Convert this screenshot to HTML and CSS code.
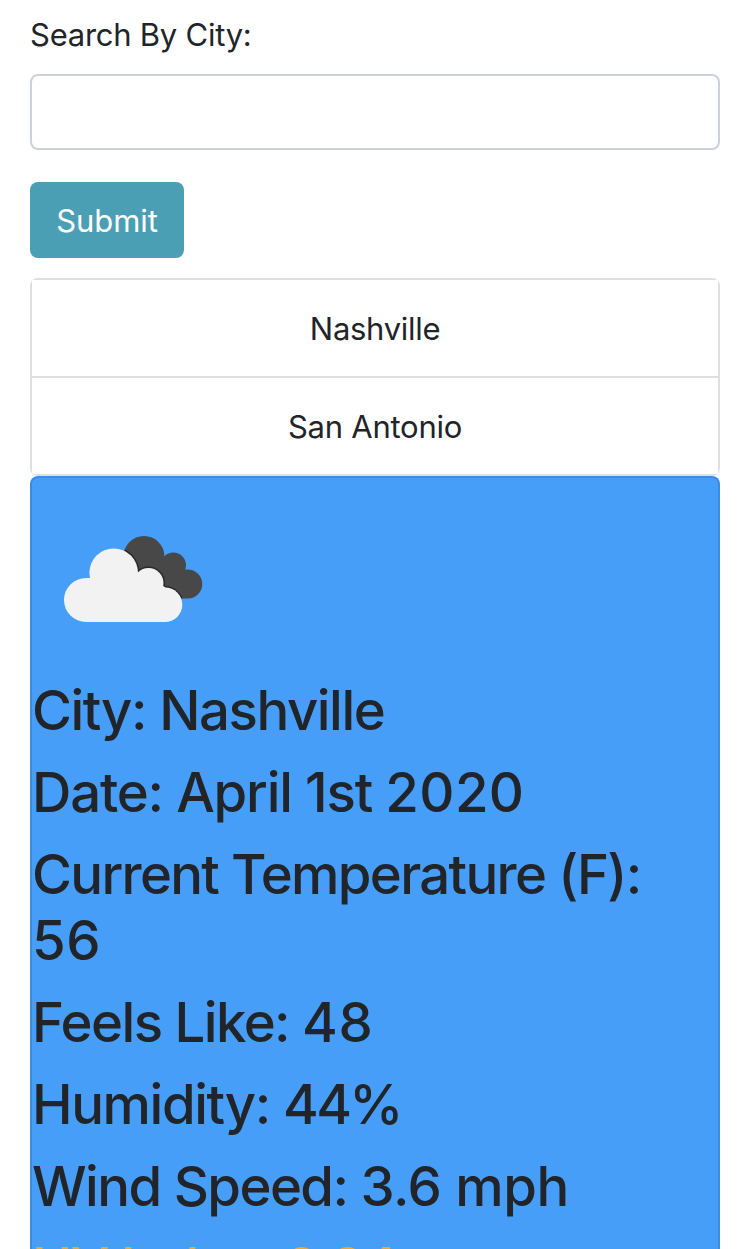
FILE: index.html
```
<!DOCTYPE html>
<html lang="en">
<head>
<meta charset="utf-8">
<title>Weather</title>
<link rel="stylesheet" href="styles.css">
</head>
<body>
<main class="page">
  <form class="search">
    <label class="search-label" for="city">Search By City:</label>
    <input class="search-input" id="city" type="text">
    <button class="submit" type="button">Submit</button>
  </form>
  <ul class="cities">
    <li class="city nashville">Nashville</li>
    <li class="city">San Antonio</li>
  </ul>
  <section class="card">
    <svg class="icon" viewBox="0 0 200 200" width="200" height="200">
      <defs>
        <g id="front">
          <circle cx="54" cy="122" r="22"/><circle cx="81.7" cy="94.7" r="24.3"/>
          <circle cx="116.5" cy="105" r="15"/><circle cx="133" cy="126.7" r="17.3"/>
          <path d="M54 100H120L134 110V144H54z"/>
        </g>
        <clipPath id="back">
          <circle cx="112" cy="78.5" r="20.5"/><circle cx="141.3" cy="87.3" r="12.7"/>
          <circle cx="155.7" cy="106" r="14.6"/>
          <path d="M100 90L112 78L141 87L156 106V120.6H120z"/>
        </clipPath>
      </defs>
      <g clip-path="url(#back)">
        <rect width="200" height="200" fill="#484849"/>
        <use href="#front" fill="#2b292b" stroke="#2b292b" stroke-width="3"/>
      </g>
      <use href="#front" fill="#f2f2f2"/>
    </svg>
    <h3 class="line city-name">City: Nashville</h3>
    <h3 class="line date">Date: April 1st <span class="year">2020</span></h3>
    <h3 class="line temp">Current Temperature (F): <span class="num">56</span></h3>
    <h3 class="line">Feels Like: <span class="num">48</span></h3>
    <h3 class="line humidity">Humidity: <span class="percent">44%</span></h3>
    <h3 class="line wind">Wind Speed: <span class="speed">3.6 mph</span></h3>
    <h3 class="line uv">UV Index: <span class="uv-value">6.24</span></h3>
  </section>
</main>
</body>
</html>
```
FILE: styles.css
```
* { box-sizing: border-box; }
body { margin: 0; background: #fff; color: #212529; font: 400 31px/48px Inter, sans-serif; letter-spacing: -0.25px; }
.page { display: flex; flex-direction: column; height: 1249px; padding: 11px 30px 0; overflow: hidden; }
.search-label { display: block; margin-bottom: 15px; }
.search-input { display: block; width: 100%; height: 76px; border: 2px solid #ced1db; border-radius: 8px; background: #fff; }
.submit { display: block; width: 154px; height: 76px; margin-top: 32px; padding: 2px 0 0; border: 0; border-radius: 8px; background: #4a9fb5; color: #fff; font: inherit; letter-spacing: -0.1px; }
.cities { flex: none; list-style: none; margin: 20px 0 0; padding: 0; border-radius: 8px; overflow: hidden; text-align: center; }
.city { height: 98px; padding: 25px 0; border: 2px solid #dfdfdf; }
.city + .city { border-top: 0; }
.nashville { height: 100px; letter-spacing: -0.3px; }
.card { flex: 1; min-height: 0; border: 2px solid #3f8bdd; border-bottom: 0; border-radius: 8px 8px 0 0; background: #479ef8; overflow: hidden; }
.icon { display: block; margin-bottom: -1px; }
.line { margin: 0 0 16px; font-size: 54.5px; line-height: 66px; font-weight: 500; letter-spacing: -1.55px; }
.city-name { letter-spacing: -1.43px; }
.date { letter-spacing: -1.2px; }
.temp { letter-spacing: -1.67px; }
.humidity { letter-spacing: -1.4px; }
.num { letter-spacing: 0.6px; }
.year { letter-spacing: 0.4px; }
.percent { letter-spacing: -2.6px; }
.speed { letter-spacing: -0.5px; }
.wind { margin-bottom: 15px; }
.uv { color: #f5a524; }
.uv-value { letter-spacing: -1px; }
```
